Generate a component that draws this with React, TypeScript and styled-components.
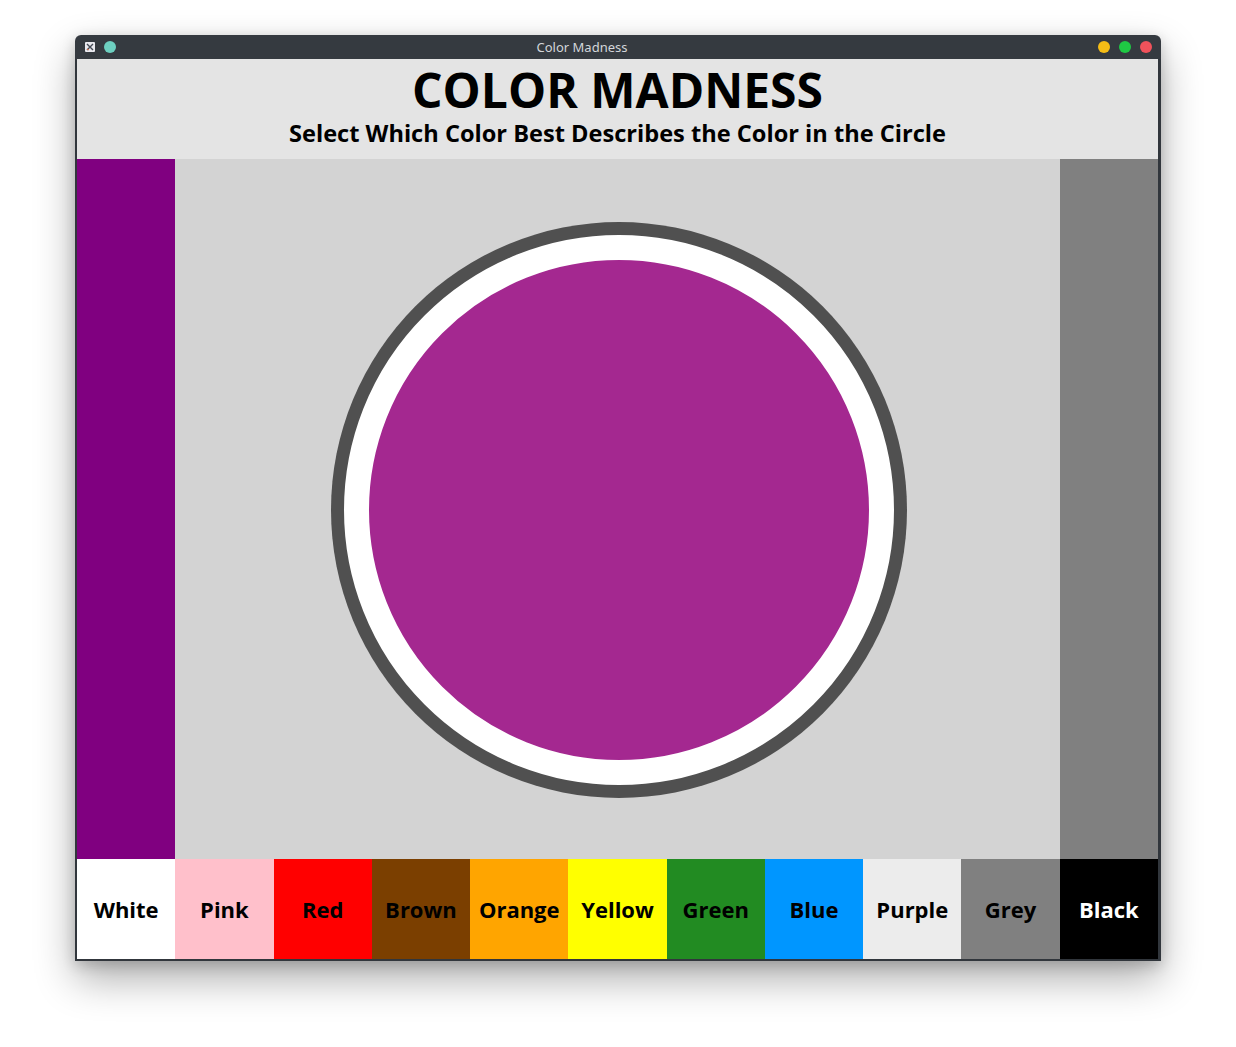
import React from "react";
import styled, { createGlobalStyle } from "styled-components";

const Global = createGlobalStyle`
  html, body { margin: 0; padding: 0; background: #ffffff; }
  body { font-family: "Open Sans", "Noto Sans", sans-serif; }
`;

const Page = styled.div`
  padding: 35px 0 0 75px;
  height: 1047px;
  box-sizing: border-box;
`;

const Window = styled.div`
  width: 1086px;
  display: flex;
  flex-direction: column;
  border-radius: 6px 6px 0 0;
  box-shadow: 0 18px 40px rgba(0, 0, 0, 0.32), 0 4px 14px rgba(0, 0, 0, 0.18);
`;

const TitleBar = styled.div`
  height: 24px;
  background: #353a40;
  border-radius: 6px 6px 0 0;
  display: flex;
  align-items: center;
  padding: 0 9px 0 10px;
`;

const LeftGroup = styled.div`
  display: flex;
  align-items: center;
  gap: 9px;
`;

const AppIcon = styled.div`
  width: 10px;
  height: 10px;
  background: #e9e9ef;
  border-radius: 1px;
  display: flex;
  align-items: center;
  justify-content: center;
`;

const Dot = styled.div<{ $c: string }>`
  width: 12px;
  height: 12px;
  border-radius: 50%;
  background: ${(p) => p.$c};
`;

const WinTitle = styled.div`
  flex: 1;
  text-align: center;
  padding-right: 50px;
  font-size: 13px;
  color: #d3d6da;
  font-family: "Noto Sans", "Open Sans", sans-serif;
`;

const RightGroup = styled.div`
  display: flex;
  align-items: center;
  gap: 9px;
`;

const Frame = styled.div`
  border: 2px solid #31363c;
  border-top: none;
  border-right-width: 3px;
  display: flex;
  flex-direction: column;
`;

const Header = styled.header`
  height: 100px;
  background: #e4e4e4;
  display: flex;
  flex-direction: column;
  align-items: center;
  justify-content: flex-start;
  color: #000;
`;

const Title = styled.h1`
  margin: 7px 0 0;
  font-size: 48px;
  font-weight: 700;
  line-height: 1;
`;

const Subtitle = styled.h2`
  margin: 8px 0 0;
  font-size: 23.6px;
  font-weight: 700;
  line-height: 1;
`;

const Stage = styled.div`
  height: 700px;
  display: grid;
  grid-template-columns: 1fr 9fr 1fr;
`;

const Side = styled.div<{ $c: string }>`
  background: ${(p) => p.$c};
`;

const Center = styled.div`
  background: #d3d3d3;
  display: flex;
  align-items: center;
  justify-content: center;
  padding: 2px 0 0 3px;
`;

const Disc = styled.div<{ $c: string }>`
  width: 500px;
  height: 500px;
  border-radius: 50%;
  background: ${(p) => p.$c};
  border: 25px solid #ffffff;
  box-shadow: 0 0 0 13px #505050;
`;

const Choices = styled.div`
  height: 100px;
  display: grid;
  grid-template-columns: repeat(11, 1fr);
`;

const Choice = styled.button<{ $bg: string; $fg: string }>`
  border: none;
  margin: 0;
  padding: 0;
  background: ${(p) => p.$bg};
  color: ${(p) => p.$fg};
  font-family: "Open Sans", "Noto Sans", sans-serif;
  font-weight: 700;
  font-size: 22px;
  display: flex;
  align-items: center;
  justify-content: center;
  cursor: pointer;
`;

const choices = [
  { label: "White", bg: "#ffffff", fg: "#000" },
  { label: "Pink", bg: "#ffc0cb", fg: "#000" },
  { label: "Red", bg: "#ff0000", fg: "#000" },
  { label: "Brown", bg: "#7b3f00", fg: "#000" },
  { label: "Orange", bg: "#ffa500", fg: "#000" },
  { label: "Yellow", bg: "#ffff00", fg: "#000" },
  { label: "Green", bg: "#228b22", fg: "#000" },
  { label: "Blue", bg: "#0096ff", fg: "#000" },
  { label: "Purple", bg: "#ececec", fg: "#000" },
  { label: "Grey", bg: "#808080", fg: "#000" },
  { label: "Black", bg: "#000000", fg: "#fff" },
];

export default function App() {
  return (
    <Page>
      <Global />
      <Window>
        <TitleBar>
          <LeftGroup>
            <AppIcon>
              <svg width="8" height="8" viewBox="0 0 8 8">
                <path d="M1 1 L7 7 M7 1 L1 7" stroke="#444a55" strokeWidth="1.4" />
                <path d="M1 6 L3 7" stroke="#e2704a" strokeWidth="1" />
              </svg>
            </AppIcon>
            <Dot $c="#6dcfc0" />
          </LeftGroup>
          <WinTitle>Color Madness</WinTitle>
          <RightGroup>
            <Dot $c="#f6bd16" />
            <Dot $c="#1fc944" />
            <Dot $c="#f0525b" />
          </RightGroup>
        </TitleBar>
        <Frame>
          <Header>
            <Title>COLOR MADNESS</Title>
            <Subtitle>Select Which Color Best Describes the Color in the Circle</Subtitle>
          </Header>
          <Stage>
            <Side $c="#800080" />
            <Center>
              <Disc $c="#a42890" />
            </Center>
            <Side $c="#808080" />
          </Stage>
          <Choices>
            {choices.map((c) => (
              <Choice key={c.label} $bg={c.bg} $fg={c.fg}>
                {c.label}
              </Choice>
            ))}
          </Choices>
        </Frame>
      </Window>
    </Page>
  );
}
